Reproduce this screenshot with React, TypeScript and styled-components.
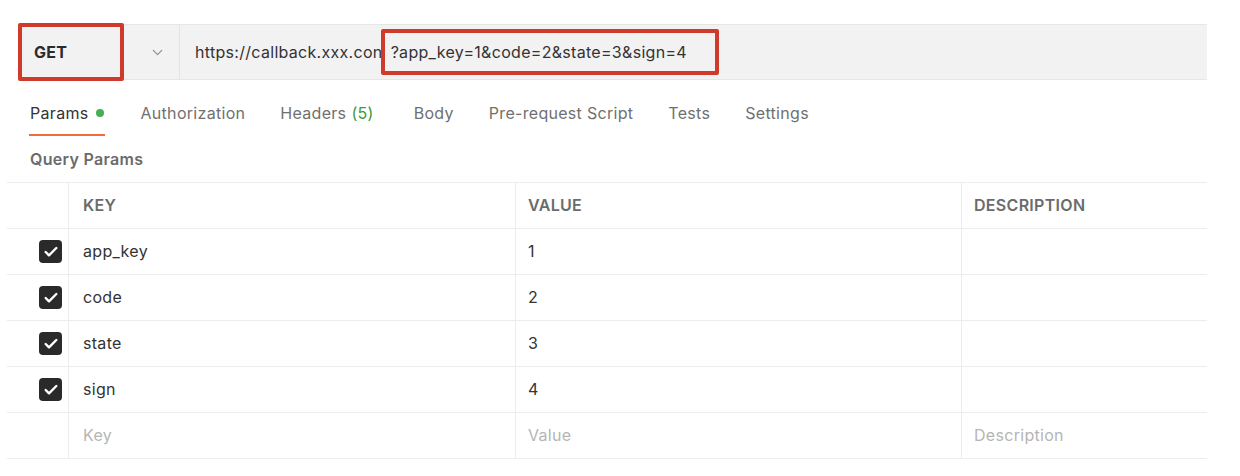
import React from 'react';
import styled, { createGlobalStyle } from 'styled-components';
import { ChevronDown, Check } from 'lucide-react';

const GlobalStyle = createGlobalStyle`
  body {
    margin: 0;
    background: #fff;
    font-family: Inter, "Open Sans", sans-serif;
    color: #333;
    letter-spacing: 0.3px;
  }
`;

const Page = styled.div`
  width: 1240px;
  height: 476px;
  padding-top: 24px;
  box-sizing: border-box;
  overflow: hidden;
`;

const RequestBar = styled.div`
  display: flex;
  align-items: stretch;
  margin-left: 18px;
  width: 1189px;
  height: 56px;
  box-sizing: border-box;
  background: #f2f2f2;
  border-top: 1px solid #e6e6e6;
  border-bottom: 1px solid #e6e6e6;
`;

const MethodCell = styled.div`
  display: flex;
  align-items: center;
  width: 162px;
  border-right: 1px solid #e4e4e4;
  box-sizing: border-box;
`;

const MethodBox = styled.div`
  display: flex;
  align-items: center;
  width: 106px;
  height: 58px;
  margin-top: -2px;
  margin-bottom: -1px;
  box-sizing: border-box;
  border: 4px solid #d03a2a;
  border-radius: 2px;
  padding-left: 12px;
  font-size: 16px;
  font-weight: 700;
  color: #2b2b2b;
`;

const Chevron = styled(ChevronDown)`
  margin-left: 25px;
  color: #8a8a8a;
`;

const UrlText = styled.div`
  display: flex;
  align-items: center;
  padding-left: 15px;
  font-size: 16px;
  color: #333;
  white-space: nowrap;
`;

const Highlight = styled.span`
  display: inline-flex;
  align-items: center;
  height: 46px;
  box-sizing: border-box;
  border: 4px solid #d03a2a;
  border-radius: 2px;
  margin-left: -2px;
  padding: 0 28px 0 6px;
`;

const Tabs = styled.div`
  display: flex;
  gap: 34px;
  margin: 20px 0 0 29px;
`;

const Tab = styled.div<{ $active?: boolean }>`
  display: flex;
  align-items: center;
  height: 36px;
  box-sizing: border-box;
  padding: 2px 0 10px 1px;
  line-height: 22px;
  font-size: 16px;
  color: ${(p) => (p.$active ? '#333' : '#707070')};
  border-bottom: 2px solid ${(p) => (p.$active ? '#f26b3a' : 'transparent')};
`;

const Dot = styled.span`
  width: 8px;
  height: 8px;
  border-radius: 50%;
  background: #43b152;
  margin: 0 1px 0 8px;
`;

const Count = styled.span`
  color: #3a9a3a;
  margin: 0 5px 0 5px;
`;

const SectionTitle = styled.div`
  padding: 10px 0 10px 30px;
  line-height: 26px;
  font-size: 16px;
  font-weight: 600;
  color: #6b6b6b;
`;

const Table = styled.div`
  display: grid;
  grid-template-columns: 61px 447px 446px 246px;
  margin-left: 7px;
  width: 1200px;
  border-top: 1px solid #ececec;
`;

const Cell = styled.div<{ $first?: boolean; $pad?: number }>`
  display: flex;
  align-items: center;
  justify-content: ${(p) => (p.$first ? 'flex-end' : 'flex-start')};
  height: 46px;
  box-sizing: border-box;
  padding: ${(p) => (p.$first ? '0 6px 0 0' : `0 0 2px ${p.$pad ?? 12}px`)};
  border-bottom: 1px solid #ececec;
  border-left: ${(p) => (p.$first ? 'none' : '1px solid #ececec')};
  font-size: 16px;
  color: #333;
`;

const HeadText = styled.span`
  font-size: 16px;
  font-weight: 600;
  color: #6b6b6b;
`;

const Placeholder = styled.span`
  color: #b5b5b5;
`;

const CheckBox = styled.div`
  display: flex;
  align-items: center;
  justify-content: center;
  width: 23px;
  height: 23px;
  border-radius: 4px;
  background: #2a2a2a;
  color: #fff;
`;

const params = [
  { key: 'app_key', value: '1' },
  { key: 'code', value: '2' },
  { key: 'state', value: '3' },
  { key: 'sign', value: '4' },
];

const tabs = ['Authorization', 'Headers', 'Body', 'Pre-request Script', 'Tests', 'Settings'];

export default function App() {
  return (
    <Page>
      <GlobalStyle />
      <RequestBar>
        <MethodCell>
          <MethodBox>GET</MethodBox>
          <Chevron size={17} strokeWidth={1.6} />
        </MethodCell>
        <UrlText>
          https://callback.xxx.con
          <Highlight>?app_key=1&amp;code=2&amp;state=3&amp;sign=4</Highlight>
        </UrlText>
      </RequestBar>

      <Tabs>
        <Tab $active>
          Params
          <Dot />
        </Tab>
        {tabs.map((t) => (
          <Tab key={t}>
            {t}
            {t === 'Headers' && <Count>(5)</Count>}
          </Tab>
        ))}
      </Tabs>

      <SectionTitle>Query Params</SectionTitle>

      <Table>
        <Cell $first />
        <Cell $pad={14}>
          <HeadText>KEY</HeadText>
        </Cell>
        <Cell>
          <HeadText>VALUE</HeadText>
        </Cell>
        <Cell>
          <HeadText>DESCRIPTION</HeadText>
        </Cell>

        {params.map((p) => (
          <React.Fragment key={p.key}>
            <Cell $first>
              <CheckBox>
                <Check size={16} strokeWidth={3.6} />
              </CheckBox>
            </Cell>
            <Cell $pad={14}>{p.key}</Cell>
            <Cell>{p.value}</Cell>
            <Cell />
          </React.Fragment>
        ))}

        <Cell $first />
        <Cell $pad={14}>
          <Placeholder>Key</Placeholder>
        </Cell>
        <Cell>
          <Placeholder>Value</Placeholder>
        </Cell>
        <Cell>
          <Placeholder>Description</Placeholder>
        </Cell>
      </Table>
    </Page>
  );
}
